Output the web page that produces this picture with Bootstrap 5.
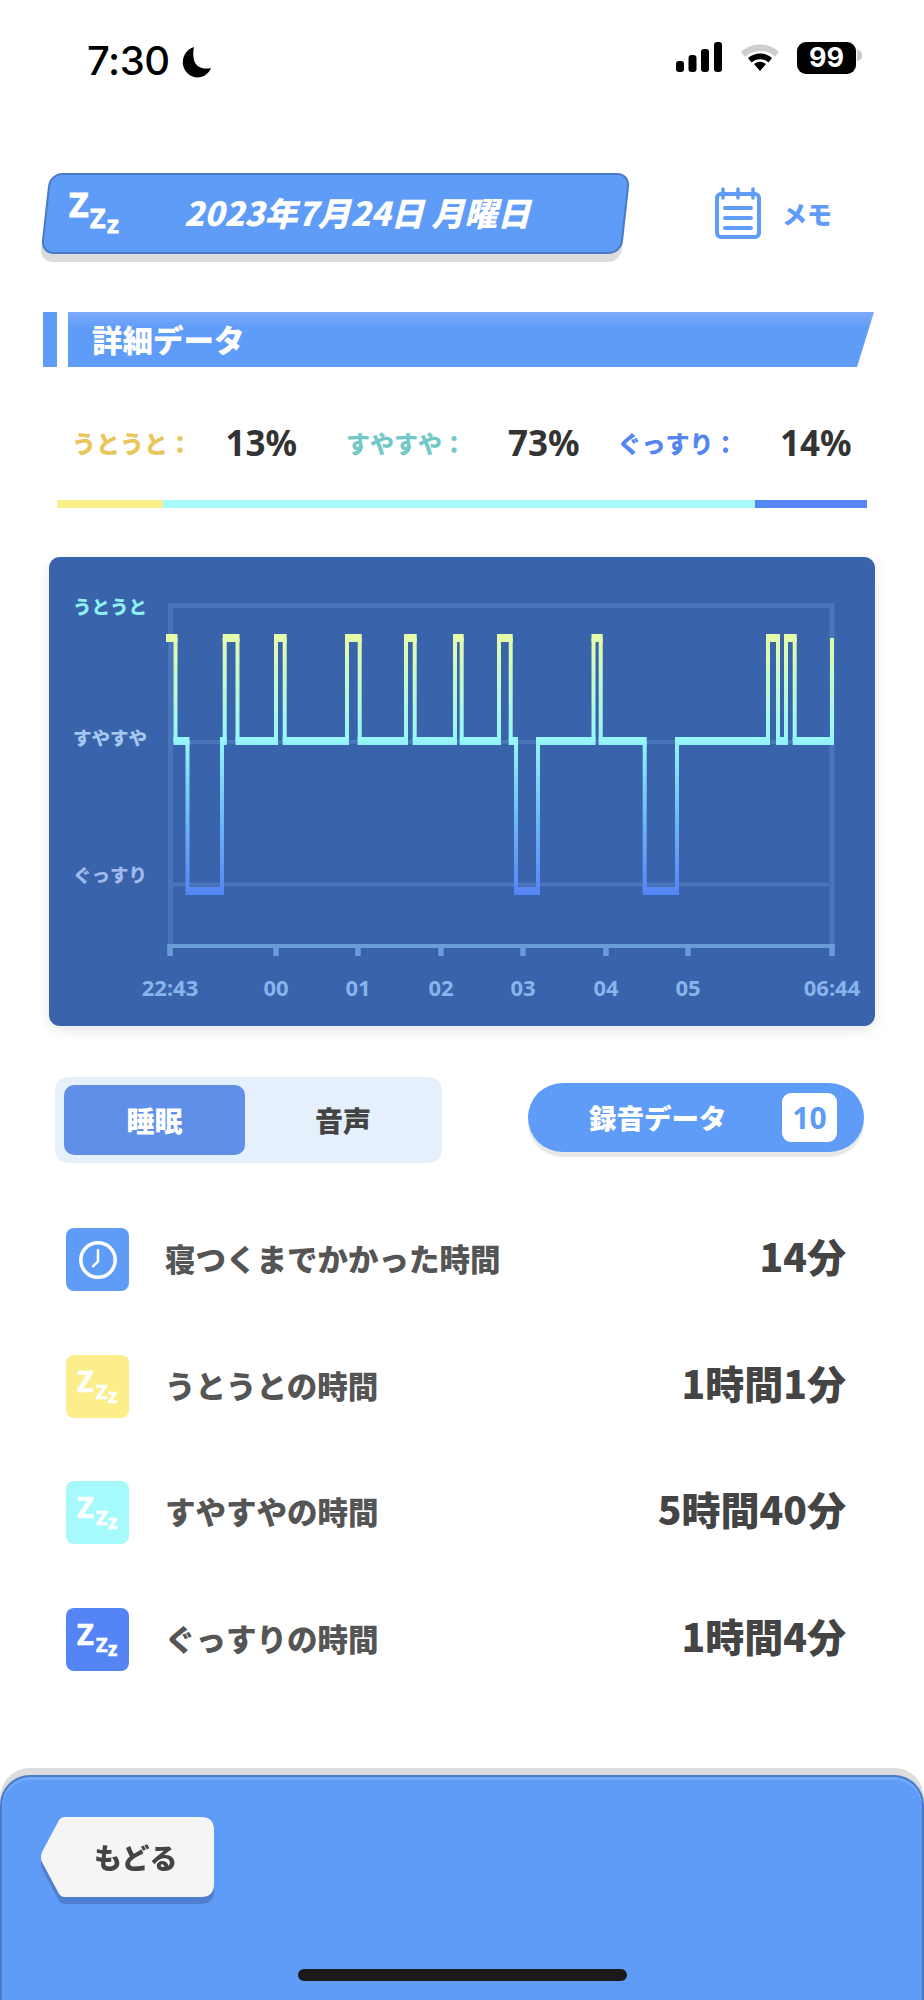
<!DOCTYPE html>
<html lang="ja">
<head>
<meta charset="UTF-8">
<meta name="viewport" content="width=device-width, initial-scale=1.0">
<title>詳細データ</title>
<link href="https://cdn.jsdelivr.net/npm/bootstrap@5.3.3/dist/css/bootstrap.min.css" rel="stylesheet">
<style>
body { background: #fff; font-family: "Noto Sans CJK JP", sans-serif; font-weight: 900; color: #444; }
.screen { width: 924px; height: 2000px; overflow: hidden; }

.status-row { height: 173px; padding: 42px 62px 0 87px; }
.clock-text { font-family: Inter, sans-serif; font-weight: 500; font-size: 40px; line-height: 38px; color: #000; letter-spacing: -.5px; }
.moon-icon { margin: 4px 0 0 11px; }
.batt { width: 59px; height: 32px; background: #000; color: #fff; border-radius: 9px; font-family: Inter, sans-serif; font-weight: 700; font-size: 27px; line-height: 32px; text-align: center; }
.batt-nub { width: 5px; height: 11px; background: #c9c9c9; border-radius: 0 5px 5px 0; margin-left: 1px; }
.wifi-icon { margin: 0 17px 0 18px; }

.head-row { padding-left: 40px; height: 89px; }
.date-banner { position: relative; width: 590px; height: 81px; color: #fff; }
.date-banner::before { content: ""; position: absolute; left: 5px; top: 0; width: 581px; height: 81px; background: #5f9cf7; border: 2px solid #4a7bc8; border-radius: 13px; transform: skewX(-6.3deg); box-shadow: 0 8px 0 #dcdcdc; }
.date-zzz { position: absolute; left: 20px; top: 4px; }
.date-text { position: absolute; left: 144px; top: 15px; font-size: 33px; line-height: 48px; font-style: italic; white-space: nowrap; }
.memo-box { margin-left: 85px; gap: 21px; padding-bottom: 9px; color: #5f9cf7; font-size: 25px; line-height: 30px; }

.section-row { margin-top: 50px; padding-left: 43px; height: 55px; gap: 11px; }
.section-strip { width: 14px; background: #5f9cf7; }
.section-main { width: 806px; color: #fff; padding-left: 24px; font-size: 30.500px; line-height: 55px; background: linear-gradient(#7faafa, #5f9cf7 16px); clip-path: polygon(0 0, 100% 0, calc(100% - 17px) 100%, 0 100%); }

.stat-row { margin-top: 52px; height: 48px; padding-left: 72px; }
.stat-name { font-size: 24px; line-height: 48px; }
.stat-num { font-family: "Noto Sans", sans-serif; font-weight: 700; font-size: 35px; line-height: 48px; color: #333; }
.doze-name { color: #e9c65c; width: 153.500px; }
.light-name { color: #75c8c8; width: 162px; }
.deep-name { color: #5585f0; width: 162.500px; }
.doze-num { width: 120.500px; }
.light-num { width: 109.500px; }
.sleep-bar { width: 810px; height: 8px; margin: 33px 0 0 57px; }
.bar-doze { background: #fcee8a; }
.bar-light { background: #a6fafc; }
.bar-deep { background: #5585f5; }

.chart-box { width: 826px; height: 469px; margin: 49px 0 0 49px; background: #3963ab; border-radius: 11px; box-shadow: 0 4px 14px rgba(0,0,0,.1); }
.chart-box svg { display: block; }
.lvl { font-size: 18.500px; font-weight: 900; }
.tick { font-family: "Noto Sans", sans-serif; font-size: 22px; font-weight: 700; fill: #89b3ec; text-anchor: middle; }

.ctrl-row { margin-top: 51px; padding-left: 55px; height: 86px; }
.seg-box { width: 387px; height: 86px; padding: 8px 9px; background: #e6effc; border-radius: 13px; font-size: 28px; line-height: 71px; text-align: center; }
.seg-on { flex: 0 0 181px; background: #5f8fe6; color: #fff; border-radius: 10px; }
.seg-off { flex: 0 0 188px; padding-left: 8px; color: #444; }
.rec-btn { width: 336px; height: 69px; margin: 6px 0 0 86px; padding: 0 27px 0 61px; background: #5f9cf7; color: #fff; border-radius: 35px; box-shadow: 0 5px 0 #e8e8e8; font-size: 27.500px; }
.rec-num { width: 55px; height: 49px; background: #fff; color: #5f9cf7; border-radius: 9px; font-family: "Noto Sans", sans-serif; font-weight: 700; font-size: 30px; line-height: 49px; text-align: center; }

.info-list { margin-top: 65px; padding: 0 78px 0 66px; }
.info-row { height: 63px; margin-bottom: 63.5px; }
.info-icon { width: 63px; height: 63px; border-radius: 8px; color: #fff; flex: none; }
.icon-clock { background: #5f9cf7; }
.info-label { margin-left: 36px; font-size: 30.500px; color: #555; line-height: 61px; }
.info-val { margin-left: auto; margin-top: -4px; font-size: 39px; color: #444; line-height: 63px; }

.foot-wrap { margin-top: auto; height: 232px; background: #dcdcdc; border-radius: 30px 30px 0 0; padding-top: 7px; }
.foot-bar { position: relative; height: 225px; background: #5f9cf7; border: 2px solid #4a7bc8; border-bottom: 0; border-radius: 30px 30px 0 0; box-shadow: inset 0 3px 0 #72aafb; }
.back-wrap { position: absolute; left: 38px; top: 40px; filter: drop-shadow(0 7px 0 #4f80cf); }
.back-btn { width: 174px; height: 80px; background: #f5f5f5; color: #444; font-size: 28px; line-height: 80px; padding-left: 54px; clip-path: path("M25 0H161Q174 0 174 13V67Q174 80 161 80H25Q20 80 18 75L2 45Q0 40 2 35L18 5Q20 0 25 0Z"); }
.home-bar { position: absolute; left: 296px; top: 192px; width: 329px; height: 12px; background: #1a1a1a; border-radius: 6px; }
</style>
</head>
<body>
<div class="screen d-flex flex-column">

  <div class="status-row d-flex">
    <div class="d-flex align-items-start">
      <span class="clock-text">7:30</span>
      <svg class="moon-icon" width="32" height="34" viewBox="0 0 32 34"><path d="M13 1C4 4 1 12 2 19c2 9 10 14 18 12 4-1 8-4 10-9-8 2-15-1-17-8-1-4-1-9 0-13z" fill="#000"/></svg>
    </div>
    <div class="d-flex align-items-start ms-auto">
      <svg width="46" height="30" viewBox="0 0 46 30" fill="#000"><rect y="19" width="8" height="11" rx="3"/><rect x="12.500" y="13" width="8" height="17" rx="3"/><rect x="25" y="7" width="8" height="23" rx="3"/><rect x="38" y="0" width="8" height="30" rx="3"/></svg>
      <svg class="wifi-icon" width="40" height="30" viewBox="0 0 40 30"><path d="M1 10C11 0 29 0 39 10l-4 5C27 7 13 7 5 15z" fill="#cfcfcf"/><path d="M8 16c7-6 17-6 24 0l-3.500 4.500c-5-4.500-12-4.500-17 0zM14 22c4-3 8-3 12 0l-6 7z" fill="#000"/></svg>
      <div class="batt">99</div>
      <div class="batt-nub mt-2"></div>
    </div>
  </div>

  <div class="head-row d-flex">
    <div class="date-banner">
      <svg class="date-zzz" width="70" height="70" viewBox="0 0 70 70" fill="#fff" font-family="Noto Sans" font-weight="700" stroke="#fff" stroke-width=".8"><text x="9" y="40" font-size="34">Z</text><text x="30" y="51" font-size="27">Z</text><text x="47" y="56" font-size="24">z</text></svg>
      <div class="date-text">2023年7月24日 月曜日</div>
    </div>
    <div class="memo-box d-flex align-items-center">
      <svg width="46" height="52" viewBox="0 0 46 52" fill="none" stroke="#5f9cf7"><rect x="2" y="7" width="42" height="43" rx="4" stroke-width="4"/><path d="M8 2v9M23 2v9M38 2v9" stroke-width="3.500" stroke-linecap="round"/><path d="M10 21h26M10 31h26M10 41h26" stroke-width="4" stroke-linecap="round"/></svg>
      <span>メモ</span>
    </div>
  </div>

  <div class="section-row d-flex">
    <div class="section-strip"></div>
    <div class="section-main">詳細データ</div>
  </div>

  <div class="stat-row d-flex">
    <span class="stat-name doze-name">うとうと：</span>
    <span class="stat-num doze-num">13%</span>
    <span class="stat-name light-name">すやすや：</span>
    <span class="stat-num light-num">73%</span>
    <span class="stat-name deep-name">ぐっすり：</span>
    <span class="stat-num">14%</span>
  </div>

  <div class="sleep-bar d-flex">
    <div class="bar-doze" style="width:106px"></div>
    <div class="bar-light" style="width:592px"></div>
    <div class="bar-deep flex-grow-1"></div>
  </div>

  <div class="chart-box">
    <svg id="sleepChart" width="826" height="469" viewBox="49 557 826 469">
      <defs>
        <linearGradient id="lineFill" gradientUnits="userSpaceOnUse" x1="0" y1="634" x2="0" y2="895">
          <stop offset="0" stop-color="#e8fca8"/>
          <stop offset=".4" stop-color="#96f7f8"/>
          <stop offset=".72" stop-color="#6db5f8"/>
          <stop offset="1" stop-color="#5585f5"/>
        </linearGradient>
      </defs>
      <g fill="none" stroke="#4b75ba" stroke-width="5">
        <path d="M170.500 946V605.500H832V946"/>
        <path d="M173 742H829M173 884.500H829" stroke-width="4"/>
      </g>
      <g stroke="#6a9dd8" stroke-width="5.500" fill="none">
        <path d="M168 946H835" stroke-width="4"/>
        <path d="M170 944V956M276 946V956M358 946V956M441 946V956M523 946V956M606 946V956M688 946V956M832 944V956"/>
      </g>
      <g id="sleepLine"></g>
      <g class="lvl">
        <text x="73" y="614" fill="#8ff0f0">うとうと</text>
        <text x="73" y="745" fill="#a6c8f0">すやすや</text>
        <text x="73" y="882" fill="#a0baf0">ぐっすり</text>
      </g>
      <g class="tick">
        <text x="170" y="996">22:43</text><text x="276" y="996">00</text><text x="358" y="996">01</text><text x="441" y="996">02</text><text x="523" y="996">03</text><text x="606" y="996">04</text><text x="688" y="996">05</text><text x="832" y="996">06:44</text>
      </g>
    </svg>
  </div>

  <div class="ctrl-row d-flex">
    <div class="seg-box d-flex">
      <div class="seg-on">睡眠</div>
      <div class="seg-off">音声</div>
    </div>
    <div class="rec-btn d-flex align-items-center justify-content-between">
      <span>録音データ</span>
      <span class="rec-num">10</span>
    </div>
  </div>

  <div class="info-list">
    <div class="info-row d-flex">
      <div class="info-icon icon-clock d-flex align-items-center justify-content-center">
        <svg width="42" height="42" viewBox="0 0 42 42" fill="none" stroke="#fff"><circle cx="21" cy="21" r="17.200" stroke-width="3.500"/><path d="M21 11.300V22.300L16 27.300" stroke-width="2.500" stroke-linecap="round" stroke-linejoin="round"/></svg>
      </div>
      <div class="info-label">寝つくまでかかった時間</div>
      <div class="info-val">14分</div>
    </div>
    <div class="info-row d-flex">
      <div class="info-icon bar-doze">
        <svg width="63" height="63" viewBox="0 0 63 63" fill="#fff" font-family="Noto Sans" font-weight="700" stroke="#fff" stroke-width=".6"><text x="11" y="37" font-size="29">Z</text><text x="30" y="44" font-size="20">Z</text><text x="42" y="48" font-size="19">z</text></svg>
      </div>
      <div class="info-label">うとうとの時間</div>
      <div class="info-val">1時間1分</div>
    </div>
    <div class="info-row d-flex">
      <div class="info-icon bar-light">
        <svg width="63" height="63" viewBox="0 0 63 63" fill="#fff" font-family="Noto Sans" font-weight="700" stroke="#fff" stroke-width=".6"><text x="11" y="37" font-size="29">Z</text><text x="30" y="44" font-size="20">Z</text><text x="42" y="48" font-size="19">z</text></svg>
      </div>
      <div class="info-label">すやすやの時間</div>
      <div class="info-val">5時間40分</div>
    </div>
    <div class="info-row d-flex">
      <div class="info-icon bar-deep">
        <svg width="63" height="63" viewBox="0 0 63 63" fill="#fff" font-family="Noto Sans" font-weight="700" stroke="#fff" stroke-width=".6"><text x="11" y="37" font-size="29">Z</text><text x="30" y="44" font-size="20">Z</text><text x="42" y="48" font-size="19">z</text></svg>
      </div>
      <div class="info-label">ぐっすりの時間</div>
      <div class="info-val">1時間4分</div>
    </div>
  </div>

  <div class="foot-wrap">
    <div class="foot-bar">
      <div class="back-wrap"><div class="back-btn">もどる</div></div>
      <div class="home-bar"></div>
    </div>
  </div>
</div>

<script src="https://cdn.jsdelivr.net/npm/bootstrap@5.3.3/dist/js/bootstrap.bundle.min.js"></script>

<script>
// x where the trace changes level, then the level it goes to
var TOP = 638, MID = 741, LOW = 891;
var steps = [[175.5,MID],[187.5,LOW],[222,MID],[224.7,TOP],[237.5,MID],[276,TOP],[284.7,MID],[347,TOP],[359.7,MID],
  [406,TOP],[414.7,MID],[455,TOP],[461.7,MID],[499,TOP],[510.7,MID],[516,LOW],[538,MID],[593.5,TOP],[600.7,MID],
  [644.7,LOW],[677,MID],[768,TOP],[778,MID],[786,TOP],[794.7,MID],[832,TOP]];

var flat = "", upright = "";
var x = 168, y = TOP;
steps.forEach(function(s){
    flat += "M" + (x - 2) + " " + y + "H" + (s[0] + 2);
    upright += "M" + s[0] + " " + y + "V" + s[1];
    x = s[0];
    y = s[1];
});

document.querySelector("#sleepLine").innerHTML =
    '<path d="' + upright + '" fill="none" stroke="url(#lineFill)" stroke-width="4"/>' +
    '<path d="' + flat + '" fill="none" stroke="url(#lineFill)" stroke-width="8"/>';
</script>

</body>
</html>
